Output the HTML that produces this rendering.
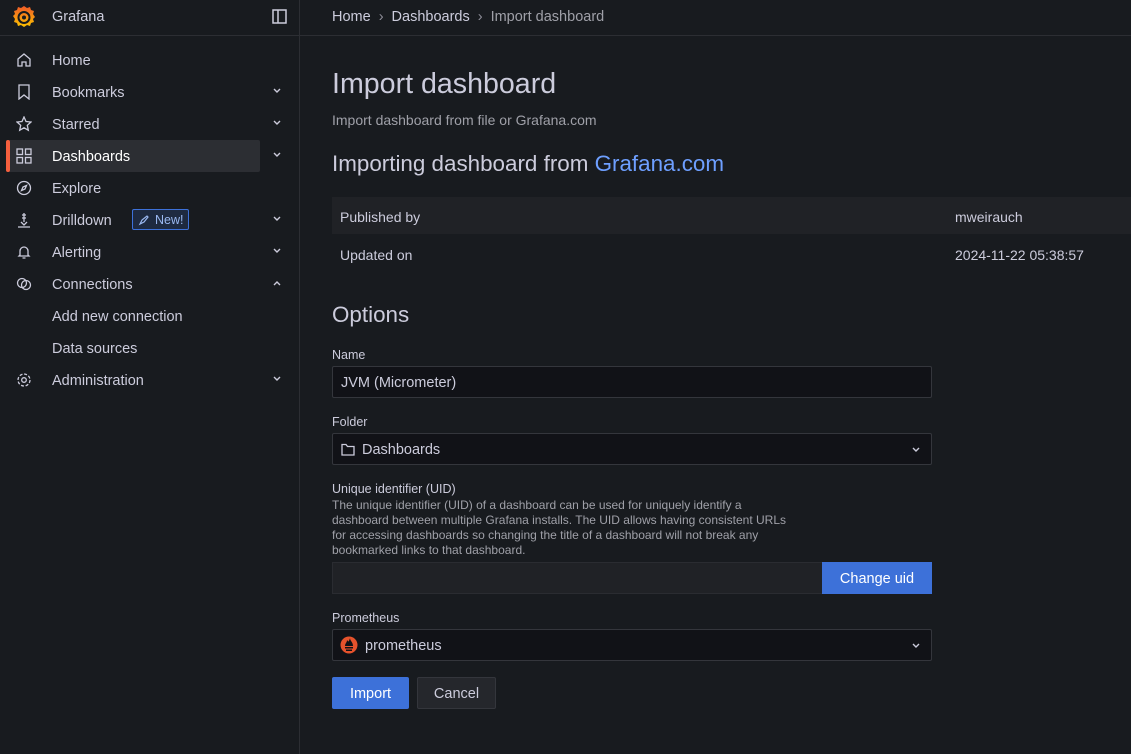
<!DOCTYPE html>
<html><head><meta charset="utf-8"><style>
*{box-sizing:border-box;margin:0;padding:0}
body{width:1131px;height:754px;overflow:hidden;background:#181b1f;font-family:"Liberation Sans",sans-serif;color:#ccccdc;font-size:14px;position:relative}
.side{position:absolute;left:0;top:0;width:300px;height:754px;background:#181b1f;border-right:1px solid #2c2e33}
.top{position:absolute;left:300px;top:0;right:0;height:36px;border-bottom:1px solid #2c2e33}
.sidehead{height:36px;border-bottom:1px solid #2c2e33;position:relative}
.item{position:absolute;left:0;width:300px;height:32px;line-height:34px;color:#ccccdc;font-size:14.5px}
.item .t{position:absolute;left:52px}
.item svg.i{position:absolute;left:16px;top:8px}
.chev{position:absolute;left:273px;top:12px}
.abs{position:absolute}
.inp{position:absolute;left:332px;width:600px;height:32px;background:#111217;border:1px solid #34363c;border-radius:2px;line-height:32px;padding-left:8px;font-size:14.5px}
.lbl{position:absolute;left:332px;font-size:12.5px;color:#ccccdc}
</style></head><body>
<div class="side">
 <div class="sidehead">
  <svg class="abs" style="left:11px;top:4px" width="26" height="27" viewBox="0 0 26 27"><defs><linearGradient id="g" x1="0" y1="1" x2="0" y2="0"><stop offset="0" stop-color="#fcc200"/><stop offset="1" stop-color="#f05a28"/></linearGradient></defs><path d="M13 2l3 2 3-1 1 3 3 1-1 3 2 3-2 2 1 3-3 1-1 3-3-1-3 2-3-2-3 1-1-3-3-1 1-3-2-3 2-2-1-3 3-1 1-3 3 1z" fill="url(#g)"/><circle cx="13" cy="13.5" r="5.5" fill="none" stroke="#181b1f" stroke-width="2"/><circle cx="13" cy="13.5" r="2" fill="#181b1f"/></svg>
  <div class="abs" style="left:52px;top:9px;font-size:14.5px">Grafana</div>
  <svg class="abs" style="left:272px;top:9px" width="15" height="15" viewBox="0 0 15 15"><rect x="1" y="1" width="13" height="13" fill="none" stroke="#ccccdc" stroke-width="1.5"/><line x1="6" y1="1" x2="6" y2="14" stroke="#ccccdc" stroke-width="1.5"/></svg>
 </div>
 <svg width="0" height="0" style="position:absolute"><defs><path id="cv" d="M1 1l3 3 3-3" fill="none" stroke="#ccccdc" stroke-width="1.4"/></defs></svg>
 <div class="item" style="top:44px"><svg class="i" width="16" height="16" viewBox="0 0 16 16" fill="none" stroke="#ccccdc" stroke-width="1.3"><path d="M2 7l6-5 6 5v7H10v-4H6v4H2z"/></svg><span class="t">Home</span></div>
 <div class="item" style="top:76px"><svg class="i" width="16" height="16" viewBox="0 0 16 16" fill="none" stroke="#ccccdc" stroke-width="1.3"><path d="M3 1h10v14l-5-4-5 4z"/></svg><span class="t">Bookmarks</span><svg class="chev" width="8" height="6"><use href="#cv"/></svg></div>
 <div class="item" style="top:108px"><svg class="i" width="16" height="16" viewBox="0 0 16 16" fill="none" stroke="#ccccdc" stroke-width="1.3"><path d="M8 1l2 4.5 5 .5-3.7 3.3 1 4.9L8 11.8 3.7 14.2l1-4.9L1 6l5-.5z"/></svg><span class="t">Starred</span><svg class="chev" width="8" height="6"><use href="#cv"/></svg></div>
 <div class="abs" style="left:6px;top:140px;width:254px;height:32px;background:#2c2e33;border-radius:2px"></div>
 <div class="abs" style="left:6px;top:140px;width:4px;height:32px;background:#f55f3e;border-radius:2px"></div>
 <div class="item" style="top:140px"><svg class="i" width="16" height="16" viewBox="0 0 16 16" fill="none" stroke="#ccccdc" stroke-width="1.3"><rect x="1" y="1" width="5.5" height="5.5"/><rect x="9.5" y="1" width="5.5" height="5.5"/><rect x="1" y="9.5" width="5.5" height="5.5"/><rect x="9.5" y="9.5" width="5.5" height="5.5"/></svg><span class="t" style="color:#fff">Dashboards</span><svg class="chev" width="8" height="6"><use href="#cv"/></svg></div>
 <div class="item" style="top:172px"><svg class="i" width="16" height="16" viewBox="0 0 16 16" fill="none" stroke="#ccccdc" stroke-width="1.3"><circle cx="8" cy="8" r="6.5"/><path d="M10.5 5.5L9 9 5.5 10.5 7 7z"/></svg><span class="t">Explore</span></div>
 <div class="item" style="top:204px"><svg class="i" width="16" height="16" viewBox="0 0 16 16" fill="none" stroke="#ccccdc" stroke-width="1.3"><path d="M8 1v9M6 3h4M6 6h4M5 10l3 3 3-3M2 15h12"/></svg><span class="t">Drilldown</span>
  <span class="abs" style="left:132px;top:5px;width:57px;height:21px;border:1px solid #3d71d9;background:#1e2a40;border-radius:2px;line-height:20px;font-size:12.5px;color:#9ab8f0;padding-left:22px">New!</span>
  <svg class="abs" style="left:138px;top:10px" width="12" height="12" viewBox="0 0 12 12" fill="none" stroke="#9ab8f0" stroke-width="1.2"><path d="M2 10l2-4 5-4 1 1-4 5zM2 10l2-1"/></svg>
  <svg class="chev" width="8" height="6"><use href="#cv"/></svg></div>
 <div class="item" style="top:236px"><svg class="i" width="16" height="16" viewBox="0 0 16 16" fill="none" stroke="#ccccdc" stroke-width="1.3"><path d="M4 11V7a4 4 0 018 0v4l1 1H3zM6.5 14h3"/></svg><span class="t">Alerting</span><svg class="chev" width="8" height="6"><use href="#cv"/></svg></div>
 <div class="item" style="top:268px"><svg class="i" width="16" height="16" viewBox="0 0 16 16" fill="none" stroke="#ccccdc" stroke-width="1.3"><circle cx="6" cy="7" r="4.5"/><circle cx="10" cy="9" r="4.5"/></svg><span class="t">Connections</span><svg class="chev" width="8" height="6" style="transform:rotate(180deg)"><use href="#cv"/></svg></div>
 <div class="item" style="top:300px"><span class="t">Add new connection</span></div>
 <div class="item" style="top:332px"><span class="t">Data sources</span></div>
 <div class="item" style="top:364px"><svg class="i" width="16" height="16" viewBox="0 0 16 16" fill="none" stroke="#ccccdc" stroke-width="1.3"><circle cx="8" cy="8" r="2.3"/><circle cx="8" cy="8" r="6" stroke-dasharray="3 1.7"/></svg><span class="t">Administration</span><svg class="chev" width="8" height="6"><use href="#cv"/></svg></div>
</div>
<div class="top"><div class="abs" style="left:32px;top:9px;font-size:14.5px"><span style="color:#ccccdc">Home</span><span style="color:#8e8e99;margin:0 8px">›</span><span>Dashboards</span><span style="color:#8e8e99;margin:0 8px">›</span><span style="color:#9fa0a8">Import dashboard</span></div></div>

<div class="abs" style="left:332px;top:68px;font-size:28.6px;color:#ccccdc">Import dashboard</div>
<div class="abs" style="left:332px;top:112px;font-size:14px;color:#9fa0a8">Import dashboard from file or Grafana.com</div>
<div class="abs" style="left:332px;top:151px;font-size:22.4px;color:#ccccdc">Importing dashboard from <span style="color:#6e9fff">Grafana.com</span></div>
<div class="abs" style="left:332px;top:197px;width:799px;height:37px;background:#202226"></div>
<div class="abs" style="left:340px;top:209px;font-size:14px">Published by</div>
<div class="abs" style="left:955px;top:209px;font-size:14px">mweirauch</div>
<div class="abs" style="left:340px;top:247px;font-size:14px">Updated on</div>
<div class="abs" style="left:955px;top:247px;font-size:14px">2024-11-22 05:38:57</div>
<div class="abs" style="left:332px;top:302px;font-size:22.4px">Options</div>
<div class="lbl" style="top:348px">Name</div>
<div class="inp" style="top:366px">JVM (Micrometer)</div>
<div class="lbl" style="top:415px">Folder</div>
<div class="inp" style="top:433px;padding-left:29px">Dashboards<svg class="abs" style="right:11px;top:13px" width="8" height="6"><use href="#cv"/></svg></div>
<svg class="abs" style="left:341px;top:443px" width="14" height="13" viewBox="0 0 14 13" fill="none" stroke="#ccccdc" stroke-width="1.3"><path d="M1 1.5h4l1.5 2H13v8.5H1z"/></svg>
<div class="lbl" style="top:482px">Unique identifier (UID)</div>
<div class="abs" style="left:332px;top:498px;width:462px;font-size:12px;line-height:15px;color:#9fa0a8">The unique identifier (UID) of a dashboard can be used for uniquely identify a dashboard between multiple Grafana installs. The UID allows having consistent URLs for accessing dashboards so changing the title of a dashboard will not break any bookmarked links to that dashboard.</div>
<div class="abs" style="left:332px;top:562px;width:491px;height:32px;background:#202226;border:1px solid #2a2c31"></div>
<div class="abs" style="left:822px;top:562px;width:110px;height:32px;background:#3d71d9;color:#fff;text-align:center;line-height:34px;font-size:14.5px">Change uid</div>
<div class="lbl" style="top:611px">Prometheus</div>
<div class="inp" style="top:629px;padding-left:32px">prometheus<svg class="abs" style="right:11px;top:13px" width="8" height="6"><use href="#cv"/></svg></div>
<svg class="abs" style="left:340px;top:636px" width="18" height="18" viewBox="0 0 18 18"><circle cx="9" cy="9" r="8.5" fill="#e6522c"/><path d="M5 11h8v1.5H5zM6 13.5h6V15H6zM5 10c0-3 2-3 2-6 1 1 1 2 2 1 0-1 1-2 1-3 0 3 3 4 3 8z" fill="#111217"/></svg>
<div class="abs" style="left:332px;top:677px;width:77px;height:32px;background:#3d71d9;color:#fff;text-align:center;line-height:34px;font-size:14.5px;border-radius:2px">Import</div>
<div class="abs" style="left:417px;top:677px;width:79px;height:32px;background:#25272c;border:1px solid #34363c;color:#ccccdc;text-align:center;line-height:32px;font-size:14.5px;border-radius:2px">Cancel</div>
</body></html>
